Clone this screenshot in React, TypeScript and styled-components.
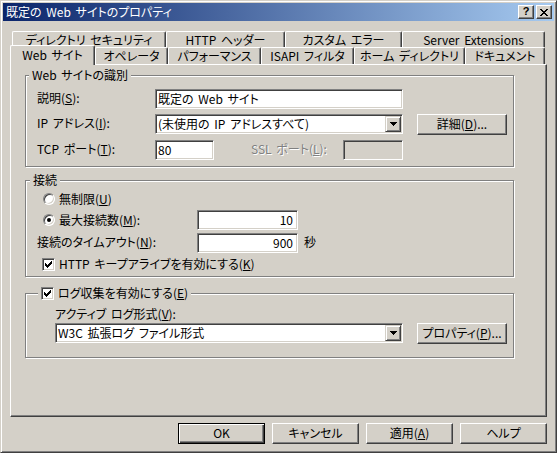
import React from "react";
import styled, { createGlobalStyle, css } from "styled-components";

const FACE = "#d4d0c8";
const HI = "#ffffff";
const SHADOW = "#808080";
const DARK = "#404040";

const GlobalStyle = createGlobalStyle`
  * { box-sizing: border-box; }
  html, body { margin: 0; padding: 0; background: ${FACE}; }
  body {
    font-family: "Noto Sans CJK JP", "Noto Sans", sans-serif;
    font-size: 12px;
    color: #000;
  }
  u { text-decoration: underline; text-underline-offset: 1px; }
`;

const Window = styled.div`
  width: 557px;
  height: 453px;
  background: ${FACE};
  border: 1px solid;
  border-color: ${FACE} ${DARK} ${DARK} ${FACE};
  box-shadow: inset 1px 1px 0 ${HI}, inset -1px -1px 0 ${SHADOW};
  padding: 2px;
  display: flex;
  flex-direction: column;
  font-feature-settings: "palt";
  word-spacing: 2px;
  line-height: 14px;
`;

const TitleBar = styled.div`
  height: 18px;
  flex: none;
  display: flex;
  align-items: center;
  padding: 0 2px 0 3px;
  background: linear-gradient(to right, #0a246a, #a6caf0);
  color: #fff;
`;

const TitleText = styled.div`
  flex: 1;
  white-space: nowrap;
  font-size: 12px;
  line-height: 18px;
`;

const CaptionButtons = styled.div`
  display: flex;
  gap: 2px;
`;

const CaptionButton = styled.div`
  width: 16px;
  height: 14px;
  background: ${FACE};
  border: 1px solid;
  border-color: ${HI} ${DARK} ${DARK} ${HI};
  box-shadow: inset -1px -1px 0 ${SHADOW};
  display: flex;
  align-items: center;
  justify-content: center;
  color: #000;
`;

const HelpGlyph = styled.span`
  font-family: "Liberation Sans", Arial, sans-serif;
  font-weight: bold;
  font-size: 11px;
  line-height: 11px;
  margin-top: -1px;
`;

const Body = styled.div`
  flex: 1;
  display: flex;
  flex-direction: column;
  padding: 10px 7px 0 7px;
`;

const TabRow = styled.div<{ $h: number; $pl: number }>`
  display: flex;
  height: ${(p) => p.$h}px;
  padding-left: ${(p) => p.$pl}px;
  flex: none;
`;

const Tab = styled.div<{ $w: number; $active?: boolean }>`
  position: relative;
  flex: none;
  width: ${(p) => p.$w}px;
  height: 100%;
  background: ${FACE};
  border-top: 1px solid ${HI};
  border-left: 1px solid ${HI};
  border-right: 1px solid ${DARK};
  border-radius: 2px 2px 0 0;
  box-shadow: inset -1px 0 0 ${SHADOW};
  display: flex;
  align-items: center;
  justify-content: center;
  white-space: nowrap;
  ${(p) =>
    p.$active &&
    css`
      height: 20px;
      margin-top: -2px;
      padding-bottom: 1px;
      z-index: 1;
    `}
`;

const Panel = styled.div`
  height: 353px;
  flex: none;
  border: 1px solid;
  border-color: ${HI} ${DARK} ${DARK} ${HI};
  box-shadow: inset -1px -1px 0 ${SHADOW};
  padding: 10px 0 0 14px;
  display: flex;
  flex-direction: column;
`;

const Group = styled.div<{ $h: number; $mt?: number }>`
  position: relative;
  flex: none;
  width: 489px;
  height: ${(p) => p.$h}px;
  margin-top: ${(p) => p.$mt ?? 0}px;
  border: 1px solid ${SHADOW};
  box-shadow: inset 1px 1px 0 ${HI}, 1px 1px 0 ${HI};
`;

const Caption = styled.div<{ $left: number }>`
  position: absolute;
  top: -8px;
  left: ${(p) => p.$left}px;
  height: 14px;
  padding: 0 3px;
  background: ${FACE};
  display: flex;
  align-items: center;
  gap: 4px;
  white-space: nowrap;
  line-height: 14px;
`;

const GroupContent = styled.div<{ $pt: number; $pl: number }>`
  display: flex;
  flex-direction: column;
  padding: ${(p) => p.$pt}px 0 0 ${(p) => p.$pl}px;
`;

const Row = styled.div<{ $h: number; $mt?: number }>`
  display: flex;
  align-items: center;
  height: ${(p) => p.$h}px;
  margin-top: ${(p) => p.$mt ?? 0}px;
`;

const Label = styled.span<{ $w?: number; $ml?: number; $disabled?: boolean }>`
  flex: none;
  ${(p) => (p.$w ? `width: ${p.$w}px;` : "")}
  margin-left: ${(p) => p.$ml ?? 0}px;
  white-space: nowrap;
  line-height: 14px;
  margin-top: -3px;
  ${(p) =>
    p.$disabled &&
    css`
      color: ${SHADOW};
      text-shadow: 1px 1px 0 ${HI};
    `}
`;

const Text = styled.span`
  white-space: nowrap;
  line-height: 14px;
`;

const Lead = styled.span<{ $w?: number; $indent: number }>`
  flex: none;
  display: flex;
  align-items: center;
  gap: 4px;
  ${(p) => (p.$w ? `width: ${p.$w}px;` : "")}
  padding-left: ${(p) => p.$indent}px;
  white-space: nowrap;
`;

const sunken = css`
  border: 1px solid;
  border-color: ${SHADOW} ${HI} ${HI} ${SHADOW};
  box-shadow: inset 1px 1px 0 ${DARK}, inset -1px -1px 0 ${FACE};
`;

const Field = styled.div<{ $w: number; $right?: boolean; $disabled?: boolean }>`
  flex: none;
  width: ${(p) => p.$w}px;
  height: 20px;
  ${sunken}
  background: ${(p) => (p.$disabled ? FACE : "#fff")};
  display: flex;
  align-items: center;
  justify-content: ${(p) => (p.$right ? "flex-end" : "flex-start")};
  padding: 0 ${(p) => (p.$right ? 4 : 2)}px 1px 2px;
  white-space: nowrap;
`;

const Combo = styled.div<{ $w: number }>`
  flex: none;
  width: ${(p) => p.$w}px;
  height: 20px;
  ${sunken}
  background: #fff;
  display: flex;
  padding: 1px;
  align-self: flex-start;
`;

const ComboText = styled.div`
  flex: 1;
  display: flex;
  align-items: center;
  padding: 0 0 1px 1px;
  white-space: nowrap;
`;

const ComboButton = styled.div`
  width: 16px;
  height: 16px;
  background: ${FACE};
  border: 1px solid;
  border-color: ${FACE} ${DARK} ${DARK} ${FACE};
  box-shadow: inset 1px 1px 0 ${HI}, inset -1px -1px 0 ${SHADOW};
  display: flex;
  align-items: center;
  justify-content: center;
`;

const PushButton = styled.div<{ $w: number; $ml?: number; $default?: boolean }>`
  flex: none;
  width: ${(p) => p.$w}px;
  height: 21px;
  margin-left: ${(p) => p.$ml ?? 0}px;
  align-self: flex-start;
  background: ${FACE};
  border: 1px solid;
  border-color: ${HI} ${DARK} ${DARK} ${HI};
  box-shadow: inset -1px -1px 0 ${SHADOW};
  display: flex;
  align-items: center;
  justify-content: center;
  padding-bottom: 1px;
  white-space: nowrap;
  ${(p) =>
    p.$default &&
    css`
      border-color: #000;
      box-shadow: inset 1px 1px 0 ${HI}, inset -1px -1px 0 ${DARK},
        inset -2px -2px 0 ${SHADOW};
    `}
`;

const RadioDot = styled.span<{ $checked?: boolean }>`
  flex: none;
  width: 12px;
  height: 12px;
  border-radius: 50%;
  background: #fff;
  border: 1px solid;
  border-color: ${SHADOW} ${HI} ${HI} ${SHADOW};
  box-shadow: inset 1px 1px 0 ${DARK}, inset -1px -1px 0 ${FACE};
  display: flex;
  align-items: center;
  justify-content: center;
  &::after {
    content: "";
    width: 4px;
    height: 4px;
    border-radius: 50%;
    background: ${(p) => (p.$checked ? "#000" : "transparent")};
  }
`;

const CheckBox = styled.span`
  flex: none;
  width: 13px;
  height: 13px;
  ${sunken}
  background: #fff;
  display: flex;
  align-items: center;
  justify-content: center;
`;

const Footer = styled.div`
  display: flex;
  justify-content: flex-end;
  gap: 7px;
  margin-top: 6px;
`;

const CloseGlyph = () => (
  <svg width="8" height="7" viewBox="0 0 8 7" shapeRendering="crispEdges">
    <path
      fill="#000"
      d="M0 0h2v1H0zM6 0h2v1H6zM1 1h2v1H1zM5 1h2v1H5zM2 2h4v1H2zM3 3h2v1H3zM2 4h4v1H2zM1 5h2v1H1zM5 5h2v1H5zM0 6h2v1H0zM6 6h2v1H6z"
    />
  </svg>
);

const CheckGlyph = () => (
  <svg width="7" height="7" viewBox="0 0 7 7" shapeRendering="crispEdges">
    <path
      fill="#000"
      d="M6 0h1v1H6zM5 1h2v1H5zM0 2h1v1H0zM4 2h3v1H4zM0 3h2v1H0zM3 3h3v1H3zM0 4h5v1H0zM1 5h3v1H1zM2 6h1v1H2z"
    />
  </svg>
);

const ArrowGlyph = () => (
  <svg width="7" height="4" viewBox="0 0 7 4" shapeRendering="crispEdges">
    <path fill="#000" d="M0 0h7v1H0zM1 1h5v1H1zM2 2h3v1H2zM3 3h1v1H3z" />
  </svg>
);

const Check = () => (
  <CheckBox>
    <CheckGlyph />
  </CheckBox>
);

const topTabs: [string, number][] = [
  ["ディレクトリ セキュリティ", 154],
  ["HTTP ヘッダー", 119],
  ["カスタム エラー", 117],
  ["Server Extensions", 143],
];

const frontTabs: [string, number, boolean][] = [
  ["Web サイト", 85, true],
  ["オペレータ", 73, false],
  ["パフォーマンス", 93, false],
  ["ISAPI フィルタ", 93, false],
  ["ホーム ディレクトリ", 111, false],
  ["ドキュメント", 80, false],
];

export default function App() {
  return (
    <>
      <GlobalStyle />
      <Window>
        <TitleBar>
          <TitleText>既定の Web サイトのプロパティ</TitleText>
          <CaptionButtons>
            <CaptionButton>
              <HelpGlyph>?</HelpGlyph>
            </CaptionButton>
            <CaptionButton>
              <CloseGlyph />
            </CaptionButton>
          </CaptionButtons>
        </TitleBar>
        <Body>
          <TabRow $h={16} $pl={2}>
            {topTabs.map(([t, w]) => (
              <Tab key={t} $w={w}>
                {t}
              </Tab>
            ))}
          </TabRow>
          <TabRow $h={17} $pl={0}>
            {frontTabs.map(([t, w, a]) => (
              <Tab key={t} $w={w} $active={a}>
                {t}
              </Tab>
            ))}
          </TabRow>
          <Panel>
            <Group $h={92}>
              <Caption $left={3}>Web サイトの識別</Caption>
              <GroupContent $pt={13} $pl={11}>
                <Row $h={20}>
                  <Label $w={118}>
                    説明(<u>S</u>):
                  </Label>
                  <Field $w={248}>既定の Web サイト</Field>
                </Row>
                <Row $h={21} $mt={5}>
                  <Label $w={118}>
                    IP アドレス(<u>I</u>):
                  </Label>
                  <Combo $w={248}>
                    <ComboText>(未使用の IP アドレスすべて)</ComboText>
                    <ComboButton>
                      <ArrowGlyph />
                    </ComboButton>
                  </Combo>
                  <PushButton $w={90} $ml={14}>
                    詳細(<u>D</u>)...
                  </PushButton>
                </Row>
                <Row $h={20} $mt={5}>
                  <Label $w={118}>
                    TCP ポート(<u>T</u>):
                  </Label>
                  <Field $w={59}>80</Field>
                  <Label $w={92} $ml={37} $disabled>
                    SSL ポート(<u>L</u>):
                  </Label>
                  <Field $w={60} $disabled />
                </Row>
              </GroupContent>
            </Group>

            <Group $h={97} $mt={13}>
              <Caption $left={4}>接続</Caption>
              <GroupContent $pt={10} $pl={11}>
                <Row $h={16}>
                  <Lead $indent={6}>
                    <RadioDot />
                    <Text>
                      無制限(<u>U</u>)
                    </Text>
                  </Lead>
                </Row>
                <Row $h={20} $mt={3}>
                  <Lead $w={160} $indent={6}>
                    <RadioDot $checked />
                    <Text>
                      最大接続数(<u>M</u>):
                    </Text>
                  </Lead>
                  <Field $w={101} $right>
                    10
                  </Field>
                </Row>
                <Row $h={20} $mt={3}>
                  <Label $w={160}>
                    接続のタイムアウト(<u>N</u>):
                  </Label>
                  <Field $w={101} $right>
                    900
                  </Field>
                  <Label $ml={6}>秒</Label>
                </Row>
                <Row $h={16} $mt={3}>
                  <Lead $indent={5}>
                    <Check />
                    <Text>
                      HTTP キープアライブを有効にする(<u>K</u>)
                    </Text>
                  </Lead>
                </Row>
              </GroupContent>
            </Group>

            <Group $h={65} $mt={16}>
              <Caption $left={12}>
                <Check />
                <Text>
                  ログ収集を有効にする(<u>E</u>)
                </Text>
              </Caption>
              <GroupContent $pt={13} $pl={29}>
                <Row $h={16}>
                  <Label>
                    アクティブ ログ形式(<u>V</u>):
                  </Label>
                </Row>
                <Row $h={21}>
                  <Combo $w={348}>
                    <ComboText>W3C 拡張ログ ファイル形式</ComboText>
                    <ComboButton>
                      <ArrowGlyph />
                    </ComboButton>
                  </Combo>
                  <PushButton $w={90} $ml={14}>
                    プロパティ(<u>P</u>)...
                  </PushButton>
                </Row>
              </GroupContent>
            </Group>
          </Panel>
          <Footer>
            <PushButton $w={87} $default>
              OK
            </PushButton>
            <PushButton $w={87}>キャンセル</PushButton>
            <PushButton $w={87}>
              適用(<u>A</u>)
            </PushButton>
            <PushButton $w={87}>ヘルプ</PushButton>
          </Footer>
        </Body>
      </Window>
    </>
  );
}
